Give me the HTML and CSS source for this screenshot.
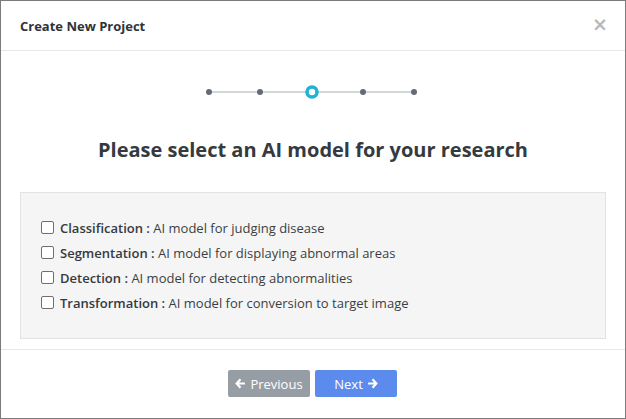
FILE: index.html
```html
<!DOCTYPE html>
<html>
<head>
<meta charset="utf-8">
<link rel="stylesheet" href="styles.css">
</head>
<body>
<div class="modal">
  <div class="modal-header">
    <div class="modal-title">Create New Project</div>
    <div class="close">&times;</div>
  </div>
  <div class="modal-body">
    <div class="stepper">
      <svg width="220" height="20" viewBox="0 0 220 20">
        <line x1="5" y1="10" x2="210" y2="10" stroke="#a9adb5" stroke-width="1"/>
        <circle cx="5" cy="10" r="3" fill="#656b76"/>
        <circle cx="56" cy="10" r="3" fill="#656b76"/>
        <circle cx="108" cy="10" r="5" fill="#fff" stroke="#1cb3d6" stroke-width="3.5"/>
        <circle cx="159" cy="10" r="3" fill="#656b76"/>
        <circle cx="210" cy="10" r="3" fill="#656b76"/>
      </svg>
    </div>
    <h2 class="heading">Please select an AI model for your research</h2>
    <div class="options">
      <label class="option"><span class="box"></span><b>Classification :</b>&nbsp;AI model for judging disease</label>
      <label class="option"><span class="box"></span><b>Segmentation :</b>&nbsp;AI model for displaying abnormal areas</label>
      <label class="option"><span class="box"></span><b>Detection :</b>&nbsp;AI model for detecting abnormalities</label>
      <label class="option"><span class="box"></span><b>Transformation :</b>&nbsp;AI model for conversion to target image</label>
    </div>
  </div>
  <div class="modal-footer">
    <button class="btn btn-prev"><svg width="11" height="11" viewBox="0 0 10 10"><path d="M5 1.2 L1.5 5 L5 8.8 M1.8 5 H9" stroke="#fff" stroke-width="2" fill="none" stroke-linejoin="miter"/></svg>Previous</button>
    <button class="btn btn-next">Next<svg width="11" height="11" viewBox="0 0 10 10"><path d="M5 1.2 L8.5 5 L5 8.8 M8.2 5 H1" stroke="#fff" stroke-width="2" fill="none" stroke-linejoin="miter"/></svg></button>
  </div>
</div>
</body>
</html>
```

FILE: styles.css
```css
* { box-sizing: border-box; }
html, body { margin: 0; padding: 0; background: #fff; }
body { font-family: "Open Sans", "Liberation Sans", sans-serif; color: #333; }
.modal {
  width: 626px;
  height: 419px;
  border: 1px solid #7b7b7b;
  display: flex;
  flex-direction: column;
}
.modal-header {
  height: 50px;
  flex: none;
  border-bottom: 1px solid #e6e8ea;
  display: flex;
  align-items: center;
  justify-content: space-between;
  padding: 0 23px 0 19px;
}
.modal-title {
  font-size: 13px;
  font-weight: 700;
  color: #2f3338;
}
.close {
  font-family: "DejaVu Sans", sans-serif;
  font-size: 19px;
  font-weight: 700;
  color: #b6bac0;
  line-height: 1;
  margin-top: -2px;
  margin-right: -6px;
}
.modal-body {
  height: 299px;
  flex: none;
  padding: 31px 19px 0 19px;
  border-bottom: 1px solid #e6e8ea;
}
.stepper {
  display: flex;
  justify-content: center;
  height: 20px;
  padding-left: 2px;
}
.heading {
  margin: 34px 0 0 0;
  text-align: center;
  font-size: 20px;
  font-weight: 700;
  line-height: 27px;
  color: #343a40;
}
.options {
  margin-top: 29px;
  background: #f5f5f5;
  border: 1px solid #e2e2e2;
  height: 147px;
  padding: 22px 20px 0 20px;
}
.option {
  display: flex;
  align-items: center;
  height: 25px;
  font-size: 13px;
  color: #3a3f45;
}
.option b { font-weight: 600; color: #353a40; }
.box {
  width: 13px;
  height: 13px;
  border: 1px solid #6f6f6f;
  border-radius: 2px;
  background: #fff;
  margin-right: 6px;
  flex: none;
}
.modal-footer {
  flex: 1;
  display: flex;
  justify-content: center;
  align-items: flex-start;
  gap: 5px;
  padding-top: 20px;
  padding-right: 1px;
}
.btn {
  width: 82px;
  height: 27px;
  border: none;
  border-radius: 2px;
  color: #fff;
  font-family: "Open Sans", "Liberation Sans", sans-serif;
  font-size: 13px;
  display: flex;
  align-items: center;
  justify-content: center;
  gap: 4px;
  padding: 0;
}
.btn-prev { background: #979da5; }
.btn-next { background: #5b8ced; }
```
